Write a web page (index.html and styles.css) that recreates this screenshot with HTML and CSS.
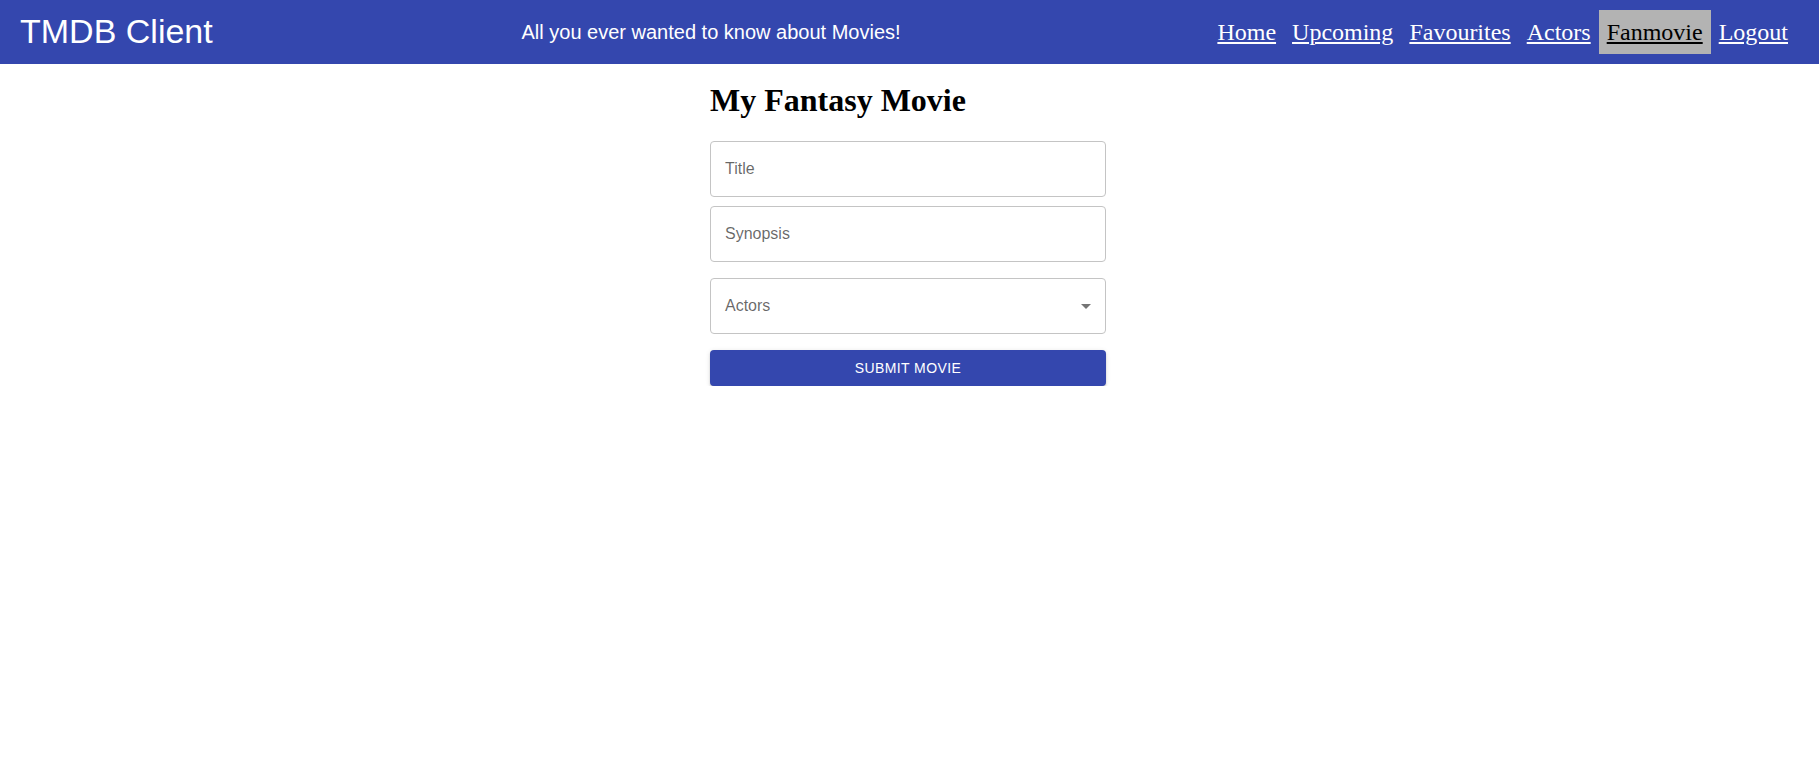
FILE: index.html
```html
<!DOCTYPE html>
<html lang="en">
<head>
<meta charset="utf-8">
<title>TMDB Client</title>
<link rel="stylesheet" href="styles.css">
</head>
<body>
<header class="appbar">
  <div class="toolbar">
    <h4 class="brand">TMDB Client</h4>
    <h6 class="tagline">All you ever wanted to know about Movies!</h6>
    <nav class="nav">
      <a class="nav-link" href="#">Home</a><a class="nav-link" href="#">Upcoming</a><a class="nav-link" href="#">Favourites</a><a class="nav-link" href="#">Actors</a><a class="nav-link active" href="#">Fanmovie</a><a class="nav-link" href="#">Logout</a>
    </nav>
  </div>
</header>
<main class="page">
  <form class="form">
    <h1 class="form-title">My Fantasy Movie</h1>
    <div class="field"><span class="placeholder">Title</span></div>
    <div class="field"><span class="placeholder">Synopsis</span></div>
    <div class="field select">
      <span class="placeholder">Actors</span>
      <svg class="arrow" viewBox="0 0 24 24" width="24" height="24"><path d="M7 10l5 5 5-5z"/></svg>
    </div>
    <button type="button" class="submit">Submit Movie</button>
  </form>
</main>
</body>
</html>
```
FILE: styles.css
```css
* { box-sizing: border-box; }
html, body { margin: 0; padding: 0; background: #fff; }
body { font-family: "Liberation Sans", Arial, sans-serif; }

.appbar {
  background: #3447ae;
  color: #fff;
}
.toolbar {
  display: flex;
  align-items: center;
  height: 64px;
  padding: 0 23px 0 20px;
}
.brand {
  margin: 0;
  flex-grow: 1;
  font-size: 34px;
  font-weight: 400;
  line-height: 1.235;
}
.tagline {
  margin: 0;
  flex-grow: 1;
  font-size: 20px;
  font-weight: 500;
  line-height: 1.6;
}
.nav {
  display: flex;
  align-items: center;
}
.nav-link {
  font-family: "Liberation Serif", "Times New Roman", serif;
  font-size: 24px;
  color: #fff;
  text-decoration: underline;
  padding: 8px;
  line-height: 28px;
}
.nav-link.active {
  background: #b3b3b3;
  color: #000;
}

.page {
  display: flex;
  justify-content: center;
  padding-right: 3px;
}
.form {
  width: 396px;
  display: flex;
  flex-direction: column;
}
.form-title {
  font-family: "Liberation Serif", "Times New Roman", serif;
  font-size: 32px;
  font-weight: 700;
  margin: 18px 0 22px;
  line-height: 37px;
}
.field {
  height: 56px;
  border: 1px solid #c4c4c4;
  border-radius: 4px;
  display: flex;
  align-items: center;
  padding: 0 14px;
  margin-bottom: 9px;
}
.field.select {
  margin-top: 7px;
  margin-bottom: 16px;
  justify-content: space-between;
  padding-right: 7px;
}
.placeholder {
  font-size: 16px;
  color: rgba(0, 0, 0, 0.6);
}
.arrow { fill: rgba(0, 0, 0, 0.54); }
.submit {
  height: 36px;
  border: 0;
  border-radius: 4px;
  background: #3447ae;
  color: #fff;
  font-family: "Liberation Sans", Arial, sans-serif;
  font-size: 14px;
  font-weight: 500;
  text-transform: uppercase;
  letter-spacing: 0.4px;
  box-shadow: 0 3px 1px -2px rgba(0,0,0,0.2), 0 2px 2px 0 rgba(0,0,0,0.14), 0 1px 5px 0 rgba(0,0,0,0.12);
  cursor: pointer;
}
```
